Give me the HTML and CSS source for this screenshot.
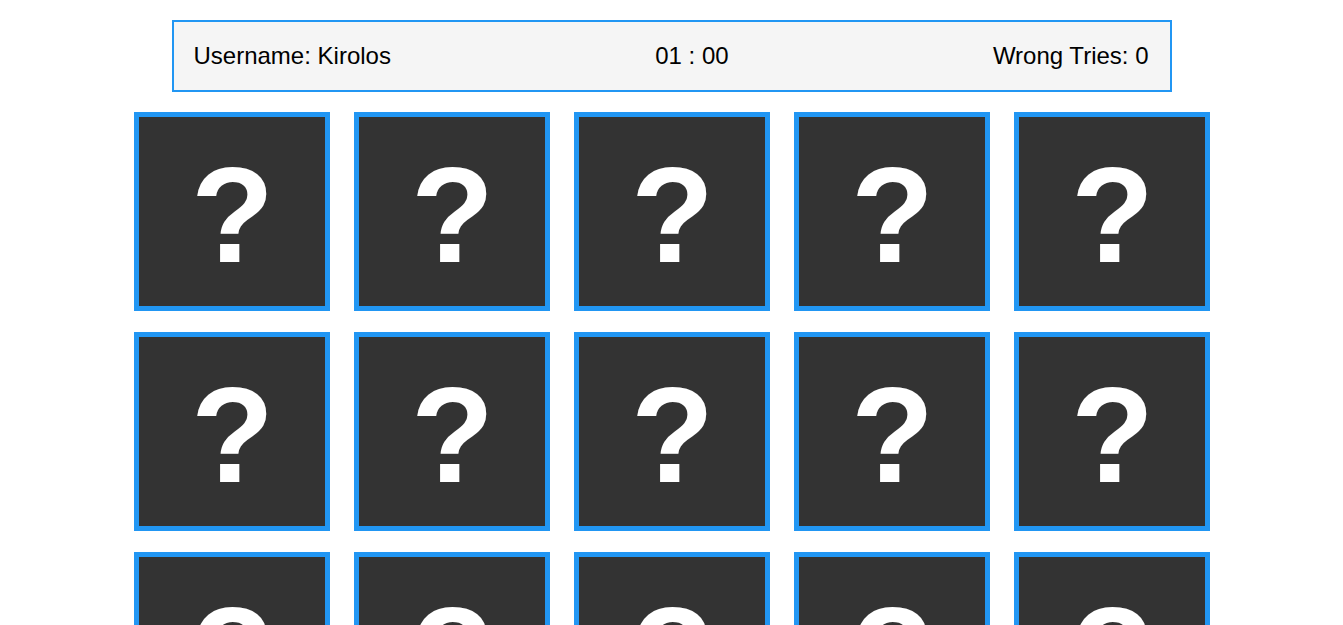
FILE: index.html
```html
<!DOCTYPE html>
<html lang="en">
<head>
<meta charset="utf-8">
<title>Memory Game</title>
<link rel="stylesheet" href="styles.css">
</head>
<body>
<div class="info">
  <div class="name">Username: <span>Kirolos</span></div>
  <div class="timer">01 : 00</div>
  <div class="tries">Wrong Tries: <span>0</span></div>
</div>
<div class="board">
  <div class="card"><span class="q">?</span></div>
  <div class="card"><span class="q">?</span></div>
  <div class="card"><span class="q">?</span></div>
  <div class="card"><span class="q">?</span></div>
  <div class="card"><span class="q">?</span></div>
  <div class="card"><span class="q">?</span></div>
  <div class="card"><span class="q">?</span></div>
  <div class="card"><span class="q">?</span></div>
  <div class="card"><span class="q">?</span></div>
  <div class="card"><span class="q">?</span></div>
  <div class="card"><span class="q">?</span></div>
  <div class="card"><span class="q">?</span></div>
  <div class="card"><span class="q">?</span></div>
  <div class="card"><span class="q">?</span></div>
  <div class="card"><span class="q">?</span></div>
</div>
</body>
</html>
```
FILE: styles.css
```css
* { box-sizing: border-box; }
body {
  margin: 0;
  font-family: "Liberation Sans", Arial, sans-serif;
  background: #fff;
  color: #000;
}
.info {
  width: 1000px;
  height: 72px;
  margin: 20px auto 0;
  padding: 0 21px 0 20px;
  background: #f5f5f5;
  border: 2px solid #2196f3;
  display: flex;
  align-items: center;
  justify-content: space-between;
  font-size: 24px;
}
.board {
  width: 1076px;
  margin: 20px auto 0;
  display: grid;
  grid-template-columns: repeat(5, 196px);
  column-gap: 24px;
  row-gap: 21px;
}
.card {
  height: 199px;
  background: #333;
  border: 5px solid #2196f3;
  display: flex;
  align-items: center;
  justify-content: center;
}
.q {
  color: #fff;
  font-weight: bold;
  font-size: 136px;
  line-height: 1;
  margin-top: 6px;
  margin-left: 2px;
}
```
